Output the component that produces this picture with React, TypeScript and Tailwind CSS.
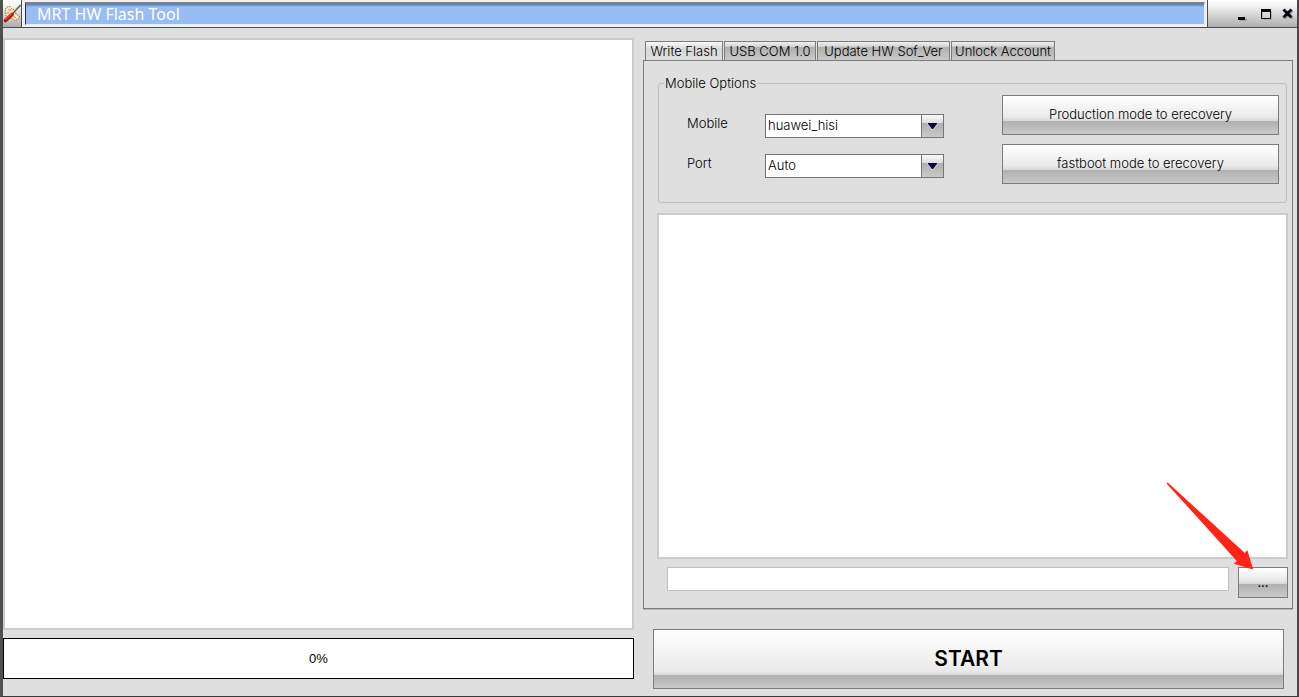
import { useState } from "react";
import type { ReactNode } from "react";

const TABS = ["Write Flash", "USB COM 1.0", "Update HW Sof_Ver", "Unlock Account"];
const TAB_WIDTHS = ["w-[78px]", "w-[92px]", "w-[133px]", "w-[104px]"];

const GLOSS =
  "border border-[#7c7c7c] bg-[linear-gradient(#ffffff_0,#eaeaea_calc(100%_-_17px),#d6d6d6_calc(100%_-_13px),#b0b0b0_calc(100%_-_13px),#c9c9c9_100%)]";

function GlossButton({ children, className = "" }: { children: ReactNode; className?: string }) {
  return (
    <button type="button" className={`${GLOSS} flex items-center justify-center ${className}`}>
      {children}
    </button>
  );
}

function SelectRow({ id, label, options }: { id: string; label: string; options: string[] }) {
  return (
    <div className="flex items-start">
      <label htmlFor={id} className="w-[78px] leading-[18px]">
        {label}
      </label>
      <div className="relative">
        <select
          id={id}
          className="block h-6 w-[179px] appearance-none border border-[#747474] bg-white pr-6 pl-[2px] outline-none"
        >
          {options.map((o) => (
            <option key={o}>{o}</option>
          ))}
        </select>
        <span className="pointer-events-none absolute top-0 right-0 flex h-6 w-[23px] items-center justify-center border border-[#747474] bg-[linear-gradient(#fafafa_0,#dcdcdc_36%,#b0b0b0_37%,#c9c9c9_100%)]">
          <svg width="11" height="7" viewBox="0 0 11 7" aria-hidden="true">
            <path d="M0 .5H11L5.5 7Z" fill="#f4f4f4" />
            <path d="M1 0H10V1L6 6H5L1 1Z" fill="#00003c" />
          </svg>
        </span>
      </div>
    </div>
  );
}

function ToolIcon() {
  return (
    <svg width="18" height="20" viewBox="0 0 18 20" aria-hidden="true">
      <path d="M2 5l4-3 3 3 3 1 1 4 4 3-5 4-3-3-5 1-1-4z" fill="#f8e6b4" stroke="#8d744a" strokeDasharray="1.5 1" />
      <path d="M5 6h3M10 12l3 2M4 9h2" stroke="#c79a3c" />
      <path d="M17.500 1L9 10" stroke="#4c4c4c" strokeWidth="1.6" />
      <path d="M16.500 1L9 9" stroke="#dcdcdc" strokeWidth=".7" />
      <path d="M9 10.500L2.500 16.500" stroke="#971212" strokeWidth="3.600" strokeLinecap="round" />
      <path d="M8.500 10L2.500 15.500" stroke="#ee3a30" strokeWidth="1.800" strokeLinecap="round" />
    </svg>
  );
}

function TitleBar() {
  return (
    <header className="flex h-7 border-b border-[#4c4c4c] bg-[linear-gradient(#ffffff_0,#f4f4f4_20%,#aeaeae_100%)]">
      <div className="flex w-[19px] items-center justify-center border-r border-[#4c4c4c]">
        <ToolIcon />
      </div>
      <div className="flex flex-1 border-r border-[#4c4c4c] bg-[#f2f2f2] pt-[2px] pr-[2px] pb-[2px] pl-[3px]">
        <h1 className="flex flex-1 items-center border border-t-2 border-t-[#7d838c] border-r-[#dff2ff] border-b-[#dff2ff] border-l-[#1c3560] bg-[linear-gradient(#5279b4_0,#98bcf3_3px)] pb-px pl-[11px] font-['Noto_Sans',sans-serif] text-[16px] leading-[18px] font-normal text-white">
          MRT HW Flash Tool
        </h1>
      </div>
      <div className="flex w-[89px] items-center justify-end gap-2 pr-[3px]">
        <button type="button" aria-label="Minimize" className="h-5 w-4">
          <svg width="16" height="20" viewBox="0 0 16 20">
            <path d="M6 14h7v3H6z" fill="#888" opacity=".5" />
            <path d="M4 13h7v3H4z" fill="#050510" />
          </svg>
        </button>
        <button type="button" aria-label="Maximize" className="h-5 w-4">
          <svg width="16" height="20" viewBox="0 0 16 20">
            <path d="M4.500 7.500h9v8h-9z" fill="none" stroke="#999" opacity=".6" />
            <path d="M3.500 5.500h9v9h-9z" fill="none" stroke="#050510" />
            <path d="M3 5h10v3H3z" fill="#050510" />
          </svg>
        </button>
        <button type="button" aria-label="Close" className="h-5 w-3">
          <svg width="12" height="20" viewBox="0 0 12 20">
            <path d="M3 7l8 8M11 7l-8 8" stroke="#999" strokeWidth="2" opacity=".6" />
            <path d="M1.500 5.500l8 8M9.500 5.500l-8 8" stroke="#050510" strokeWidth="3" />
          </svg>
        </button>
      </div>
    </header>
  );
}

export default function App() {
  const [active, setActive] = useState(0);
  return (
    <div className="flex min-h-screen flex-col border-r-2 border-b border-l-[3px] border-r-[#484848] border-b-[#3a3a3a] border-l-[#505050] bg-[#dfdfdf] font-[Inter,Arial,sans-serif] text-[13px] font-light text-black">
      <TitleBar />
      <main className="grid flex-1 grid-cols-[631fr_650fr] gap-[9px] pr-1">
        <section className="flex flex-col gap-2 pt-[10px] pb-[17px]">
          <textarea
            aria-label="Log"
            readOnly
            className="block w-full flex-1 resize-none border-2 border-[#cbcbcd] bg-white outline-none"
          />
          <div
            role="progressbar"
            aria-valuenow={0}
            className="flex h-[41px] items-center justify-center border border-black bg-white font-['Liberation_Sans',Arial,sans-serif]"
          >
            0%
          </div>
        </section>

        <section className="flex flex-col pt-[13px] pb-[7px]">
          <div role="tablist" className="flex gap-px pl-[2px]">
            {TABS.map((t, i) => (
              <button
                key={t}
                type="button"
                role="tab"
                aria-selected={i === active}
                onClick={() => setActive(i)}
                className={`${TAB_WIDTHS[i]} h-[19px] border border-b-0 border-[#7c7c7c] text-center leading-[18px] whitespace-nowrap ${
                  i === active
                    ? "bg-[linear-gradient(#fafafa_0,#d8d8d8_38%,#dfdfdf_100%)]"
                    : "bg-[linear-gradient(#f0f0f0_0,#d0d0d0_28%,#b0b0b0_30%,#c9c9c9_100%)]"
                }`}
              >
                {t}
              </button>
            ))}
          </div>

          <div
            role="tabpanel"
            className="flex flex-1 flex-col border border-[#7c7c7c] pt-3 pr-1 pb-[10px] pl-[13px] shadow-[0_1px_0_#b8b8b8]"
          >
            <fieldset className="mx-px h-[130px] rounded-[3px] border border-[#bfc0c6]">
              <legend className="ml-[5px] px-px leading-5">Mobile Options</legend>
              <div className="flex justify-between pt-[2px] pr-[7px] pl-7">
                <div className="flex flex-col gap-4 pt-[19px]">
                  <SelectRow id="mobile" label="Mobile" options={["huawei_hisi"]} />
                  <SelectRow id="port" label="Port" options={["Auto"]} />
                </div>
                <div className="flex w-[277px] flex-col gap-[9px]">
                  <GlossButton className="h-10">Production mode to erecovery</GlossButton>
                  <GlossButton className="h-10">fastboot mode to erecovery</GlossButton>
                </div>
              </div>
            </fieldset>

            <textarea
              aria-label="File list"
              readOnly
              className="mt-[10px] block flex-1 resize-none border-2 border-[#cbcbcd] bg-white outline-none"
            />

            <div className="mt-2 flex items-start gap-[9px] pl-[10px]">
              <input
                type="text"
                aria-label="Firmware path"
                className="h-6 flex-1 border border-[#bfc0c6] bg-white px-1 outline-none"
              />
              <div className="relative">
                <GlossButton className="h-[31px] w-[50px] font-normal">...</GlossButton>
                <svg
                  className="pointer-events-none absolute right-[34px] bottom-[28px]"
                  width="88"
                  height="88"
                  viewBox="0 0 88 88"
                  aria-hidden="true"
                >
                  <path
                    d="M.7 1.700Q.6 .6 2 .8L40 35.600 78.800 71 81.300 68 87.200 87.500 67.700 81.700 70.800 79 35.600 40Z"
                    fill="#ff2414"
                  />
                </svg>
              </div>
            </div>
          </div>

          <div className="mt-5 flex pr-[9px] pl-[10px]">
            <GlossButton className="h-[60px] flex-1 text-[21px] font-semibold">START</GlossButton>
          </div>
        </section>
      </main>
    </div>
  );
}
